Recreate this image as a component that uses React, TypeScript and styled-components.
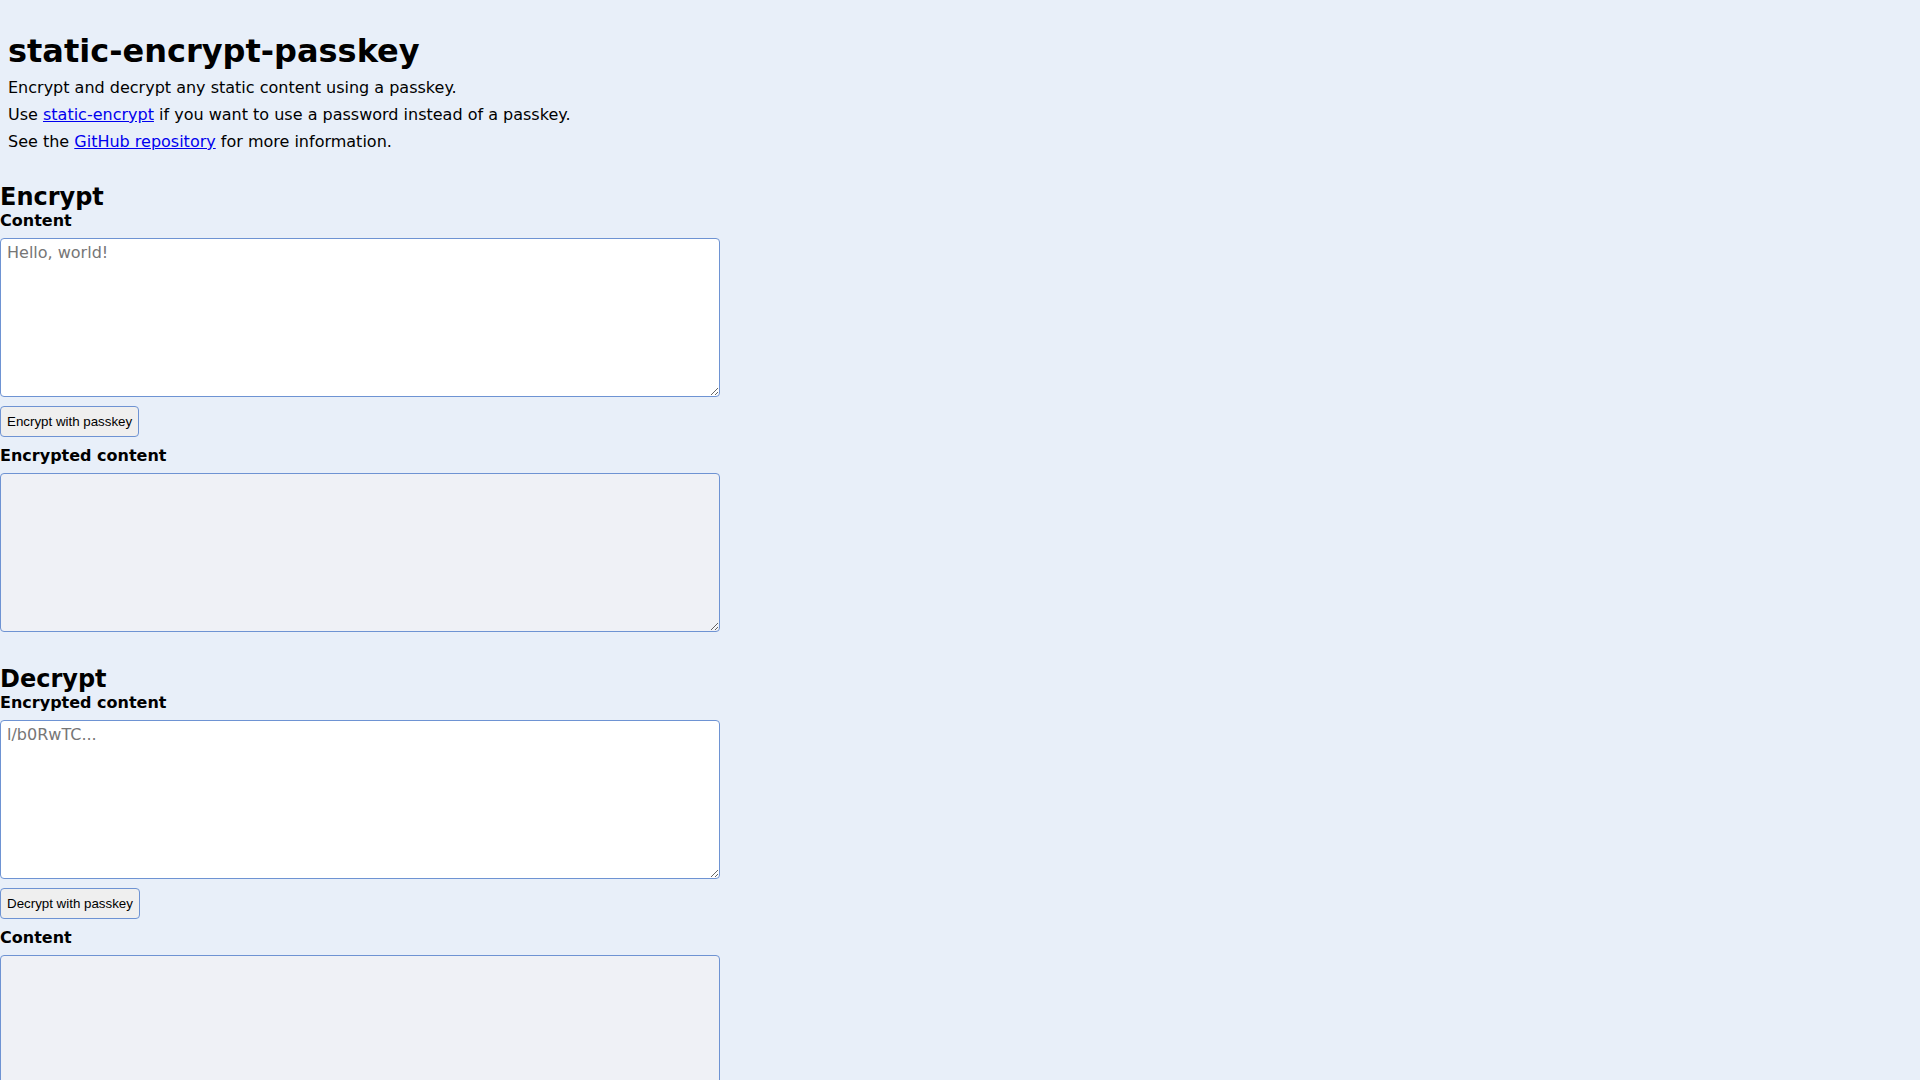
import React from "react";
import styled, { createGlobalStyle } from "styled-components";

const GlobalStyle = createGlobalStyle`
  html {
    overflow-y: scroll;
  }
  html, body {
    margin: 0;
    padding: 0;
    background: #e8eff9;
  }
  body {
    font-family: "DejaVu Sans", sans-serif;
    font-size: 16px;
    color: #000;
  }
`;

const Page = styled.main`
  display: flex;
  flex-direction: column;
  padding-bottom: 24px;
`;

const Header = styled.header`
  padding: 32px 8px 0;
`;

const Title = styled.h1`
  margin: 0;
  font-size: 32px;
  font-weight: bold;
`;

const Intro = styled.p`
  margin: 8px 0 0;
  font-size: 16px;
`;

const Link = styled.a`
  color: #0000ee;
  text-decoration: underline;
`;

const Section = styled.section<{ $gapTop: number }>`
  display: flex;
  flex-direction: column;
  align-items: flex-start;
  margin-top: ${(p) => p.$gapTop}px;
`;

const SectionTitle = styled.h2`
  margin: 0;
  font-size: 24px;
  font-weight: bold;
`;

const FieldLabel = styled.label`
  display: block;
  font-weight: bold;
  font-size: 16px;
  margin-bottom: 8px;
`;

const TextBox = styled.textarea<{ $readOnly?: boolean }>`
  box-sizing: border-box;
  width: 720px;
  height: 159px;
  margin: 0;
  padding: 4px 6px;
  border: 1px solid #6e93d3;
  border-radius: 4px;
  background: ${(p) => (p.$readOnly ? "#eff1f6" : "#ffffff")};
  font-family: "DejaVu Sans", sans-serif;
  font-size: 16px;
  color: #000;
  outline: none;

  &::placeholder {
    color: #767676;
  }
`;

const ActionButton = styled.button`
  margin: 9px 0;
  padding: 7px 6px;
  border: 1px solid #6e93d3;
  border-radius: 4px;
  background: #efefef;
  color: #000;
  font-family: "Liberation Sans", Arial, sans-serif;
  font-size: 13.333px;
  line-height: 15px;
  cursor: pointer;
`;

export default function App() {
  return (
    <>
      <GlobalStyle />
      <Page>
        <Header>
          <Title>static-encrypt-passkey</Title>
          <Intro>Encrypt and decrypt any static content using a passkey.</Intro>
          <Intro>
            Use <Link href="#">static-encrypt</Link> if you want to use a password instead of a passkey.
          </Intro>
          <Intro>
            See the <Link href="#">GitHub repository</Link> for more information.
          </Intro>
        </Header>

        <Section $gapTop={32}>
          <SectionTitle>Encrypt</SectionTitle>
          <FieldLabel htmlFor="enc-content">Content</FieldLabel>
          <TextBox id="enc-content" placeholder="Hello, world!" />
          <ActionButton type="button">Encrypt with passkey</ActionButton>
          <FieldLabel htmlFor="enc-output">Encrypted content</FieldLabel>
          <TextBox id="enc-output" readOnly $readOnly />
        </Section>

        <Section $gapTop={33}>
          <SectionTitle>Decrypt</SectionTitle>
          <FieldLabel htmlFor="dec-input">Encrypted content</FieldLabel>
          <TextBox id="dec-input" placeholder="l/b0RwTC..." />
          <ActionButton type="button">Decrypt with passkey</ActionButton>
          <FieldLabel htmlFor="dec-output">Content</FieldLabel>
          <TextBox id="dec-output" readOnly $readOnly />
        </Section>
      </Page>
    </>
  );
}
